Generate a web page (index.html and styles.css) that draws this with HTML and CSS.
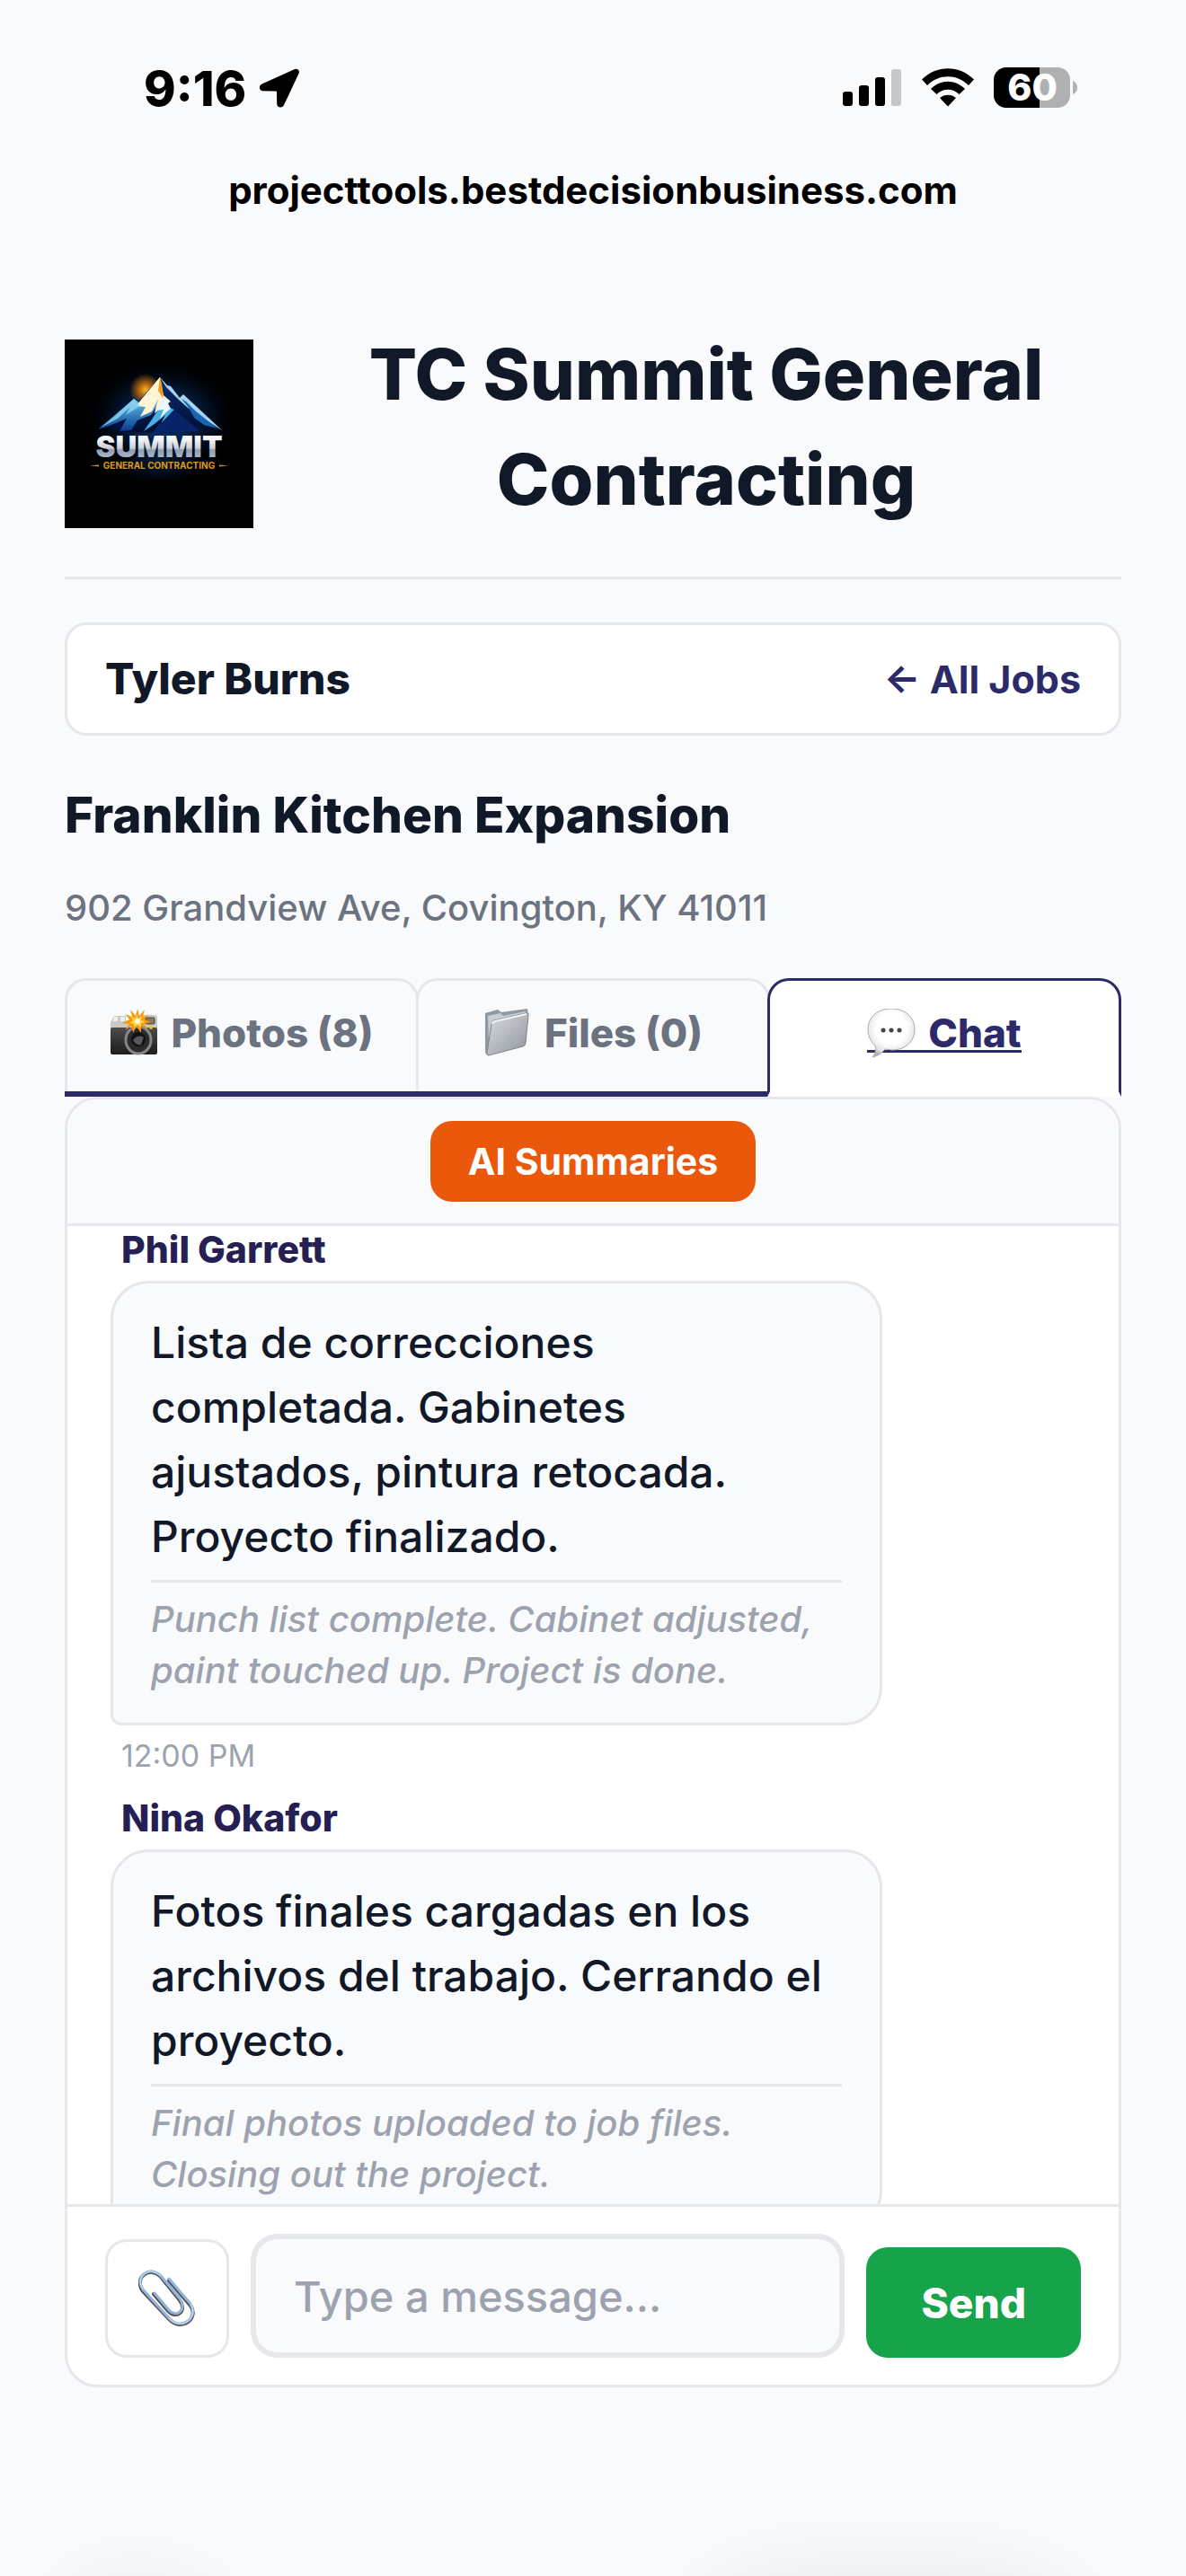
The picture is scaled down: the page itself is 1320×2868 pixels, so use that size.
FILE: index.html
```html
<!DOCTYPE html>
<html lang="en">
<head>
<meta charset="utf-8">
<meta name="viewport" content="width=device-width, initial-scale=1">
<title>Franklin Kitchen Expansion – Chat</title>
<link rel="stylesheet" href="styles.css">
</head>
<body>
<div class="screen">
  <div class="status-bar">
    <div class="status-time">
      <span>9:16</span>
      <svg class="location-icon" width="46" height="44" viewBox="0 0 46 44" aria-hidden="true"><path d="M39.500 1.200 L3.500 17.500 C-0.600 19.500 0.300 25.200 4.700 25.200 L19 25.400 Q20 25.400 20 26.400 L20.200 39.500 C20.200 44 26 45 28 41 L44.600 5.800 C46 2.500 43 -0.400 39.500 1.200Z"/></svg>
    </div>
    <div class="status-icons">
      <svg width="66" height="44" viewBox="0 0 66 44" aria-hidden="true">
        <rect x="0" y="26" width="11" height="16" rx="3"/><rect x="18" y="19" width="11" height="23" rx="3"/><rect x="36" y="10" width="11" height="32" rx="3"/><rect x="54" y="1" width="11" height="41" rx="3" fill="#c5c7c8"/>
      </svg>
      <svg width="58" height="44" viewBox="0 0 58 44" aria-hidden="true">
        <path d="M0 12.500 C16 -4 42 -4 58 12.500 L52 19 C39 6 19 6 6 19Z"/>
        <path d="M10 23 C21 12 37 12 48 23 L41.500 29 C34.500 22 23.500 22 16.500 29Z"/>
        <path d="M20 33 C25 28.500 33 28.500 38 33 L29 42.500Z"/>
      </svg>
      <svg width="94" height="58" viewBox="0 -6 94 58" aria-label="Battery 60 percent">
        <defs><clipPath id="battery"><rect width="85" height="45" rx="14"/></clipPath></defs>
        <g clip-path="url(#battery)"><rect width="51" height="45"/><rect x="51" width="34" height="45" fill="#aeb0b2"/></g>
        <path d="M88 15 Q93 17 93 22.500 Q93 28 88 30Z" fill="#aeb0b2"/>
        <text class="battery-text" x="43" y="37" text-anchor="middle">60</text>
      </svg>
    </div>
  </div>
  <div class="address-bar">projecttools.bestdecisionbusiness.com</div>

  <main class="page">
    <header class="brand">
      <svg class="brand-logo" viewBox="0 0 210 210" role="img" aria-label="Summit General Contracting">
        <defs>
          <radialGradient id="night"><stop offset="0" stop-color="#07458f"/><stop offset=".55" stop-color="#031d42" stop-opacity=".7"/><stop offset="1" stop-color="#000" stop-opacity="0"/></radialGradient>
          <radialGradient id="sun"><stop offset="0" stop-color="#ffb52a"/><stop offset=".4" stop-color="#d67a0b" stop-opacity=".8"/><stop offset="1" stop-color="#d67a0b" stop-opacity="0"/></radialGradient>
          <linearGradient id="ice" x2="0" y2="1"><stop offset="0" stop-color="#fff"/><stop offset=".45" stop-color="#5cb9e8"/><stop offset="1" stop-color="#0a3a8c"/></linearGradient>
          <linearGradient id="deep" x2="0" y2="1"><stop offset="0" stop-color="#0c2f70"/><stop offset="1" stop-color="#020d33"/></linearGradient>
          <linearGradient id="steel" x2="0" y2="1"><stop offset=".3" stop-color="#f4f5f8"/><stop offset=".55" stop-color="#c9ced8"/><stop offset=".6" stop-color="#8f9db2"/><stop offset="1" stop-color="#c2cedd"/></linearGradient>
        </defs>
        <rect width="210" height="210"/>
        <ellipse cx="108" cy="88" rx="88" ry="66" fill="url(#night)"/>
        <ellipse cx="105" cy="140" rx="60" ry="24" fill="url(#night)" opacity=".35"/>
        <circle cx="90" cy="56" r="18" fill="url(#sun)"/>
        <path d="M37 100 L77 66 L83 68 L106 42 L113 50 L128 65 L132 62 L175 101 L145 96 L121 104 L62 103 L52 97Z" fill="url(#deep)"/>
        <path d="M37 100 L77 66 L83 70 L106 42 L108 66 L96 84 L81 90 L74 101 L61 102 L69 88 L52 95Z" fill="url(#ice)"/>
        <path d="M106 42 L85 67 L80 74 L90 75 L84 86 L97 80 L104 66 L100 82 L118 69 L110 62Z" fill="#fff4d6"/>
        <path d="M106 42 L104 57 L110 66 L108 49Z" fill="#f39b16"/>
        <path d="M106 42 L114 51 L118 52 L128 65 L132 61 L175 101 L153 87 L137 76 L127 67 L113 53Z" fill="#a9d4f0"/>
        <path d="M130 66 L138 76 L144 87 L155 95 L170 99 L146 80 L135 69Z" fill="#1766b4"/>
        <path d="M77 66 L57 84 L40 98 L59 88 L73 75 L68 84 L84 74Z" fill="#8fd4f2" opacity=".8"/>
        <path d="M112 65 L97 89 L88 102 L100 94 L112 84 L107 94 L97 104 L122 78 L117 76Z" fill="#48b0e6"/>
        <path d="M122 78 L150 102 L98 104Z" fill="#07246b"/>
        <path d="M112 65 L103 79 L110 78 L106 88 L113 81 L118 77Z" fill="#eaf8ff"/>
        <text class="logo-name" x="105" y="131" text-anchor="middle" fill="url(#steel)">SUMMIT</text>
        <text class="logo-tag" x="105" y="144" text-anchor="middle">GENERAL CONTRACTING</text>
        <path d="M28 140.500 L38 139.500 V141.500Z M182 140.500 L172 139.500 V141.500Z" fill="#d98e10"/>
      </svg>
      <h1 class="brand-title">TC Summit General Contracting</h1>
    </header>

    <div class="job-bar">
      <span class="job-client">Tyler Burns</span>
      <a class="job-back" href="#jobs">← All Jobs</a>
    </div>

    <h2 class="job-title">Franklin Kitchen Expansion</h2>
    <p class="job-address">902 Grandview Ave, Covington, KY 41011</p>

    <nav class="tabs">
      <a class="tab" href="#photos">
        <svg class="tab-icon" viewBox="0 0 54 54" aria-hidden="true">
          <defs><linearGradient id="cam" x2="0" y2="1"><stop offset="0" stop-color="#4b4b4b"/><stop offset="1" stop-color="#1d1d1d"/></linearGradient></defs>
          <path d="M3 12 Q3 8 7 8 H18 V14 H33 L36 7 H50 Q53 7 53 11 V24 H1 V15Z" fill="#c9cac6"/>
          <path d="M4 9 h5 v5 h-5z M12 9 h5 v5 h-5z" fill="#eee"/>
          <rect x="40" y="10" width="10" height="7" rx="1" fill="#8a7762" stroke="#4c4238"/>
          <rect x="1" y="21" width="52" height="30" rx="2" fill="url(#cam)"/>
          <ellipse cx="32" cy="35" rx="14" ry="15" fill="#2b2b2d" stroke="#85878b" stroke-width="3"/>
          <circle cx="32" cy="34" r="8" fill="#111"/><path d="M26 35 Q32 28 38 32 L35 40 Q30 42 26 35Z" fill="#56585c"/>
          <circle cx="46" cy="21" r="2" fill="#f2c21c"/>
          <path d="M31 0 L33 8 L39 1 L37 9 L44 7 L38 12 L46 15 L38 17 L43 23 L35 19 L35 27 L30 20 L26 27 L25 19 L17 24 L22 17 L14 16 L22 12 L17 6 L25 9 L23 1 L29 8Z" fill="#f79a12"/>
          <path d="M30 6 L32 11 L36 8 L35 13 L39 14 L35 17 L35 21 L31 18 L27 21 L27 17 L22 16 L26 13 L24 9 L29 11Z" fill="#ffd63c"/><circle cx="31" cy="14" r="3" fill="#fffbe0"/>
        </svg>
        <span>Photos (8)</span>
      </a>
      <a class="tab" href="#files">
        <svg class="tab-icon" viewBox="0 0 54 54" aria-hidden="true">
          <defs><linearGradient id="fold" x2="1" y2="1"><stop offset="0" stop-color="#d8dbdf"/><stop offset=".5" stop-color="#b4b9bf"/><stop offset="1" stop-color="#8d939b"/></linearGradient></defs>
          <path d="M2 5 L16 1 L20 4 L49 0 L50 8 L12 46 L4 51 Q2 50 2 47Z" fill="#8e9aa3"/>
          <path d="M5 8 L19 5 L22 8 L47 3 V9 L6 40Z" fill="#c8ced3"/>
          <path d="M9 17 Q9 14 12 13 L47 5 Q51 4 50 8 L47 38 Q47 41 44 42 L6 52 Q3 52 4 49Z" fill="url(#fold)" stroke="#7e858c"/>
          <path d="M10 17 Q10 15 13 14 L48 6" fill="none" stroke="#f1f3f4" stroke-width="2"/>
        </svg>
        <span>Files (0)</span>
      </a>
      <a class="tab tab-active" href="#chat" aria-current="page">
        <span class="tab-underline">
          <svg class="tab-icon" viewBox="0 0 54 54" aria-hidden="true">
            <defs><radialGradient id="bub" cx=".5" cy=".4" r=".6"><stop offset=".55" stop-color="#fff"/><stop offset=".85" stop-color="#e6e6e6"/><stop offset="1" stop-color="#b5b5b5"/></radialGradient></defs>
            <path d="M27 0 C42 0 53 9 53 23 C53 37 42 46 28 46 L20 45 Q15 52 6 54 Q11 48 9 41 C4 37 1 30 1 23 C1 9 12 0 27 0Z" fill="url(#bub)" stroke="#a9a9a9"/>
            <circle cx="18" cy="24" r="2.500" fill="#444"/><circle cx="27" cy="24" r="2.500" fill="#444"/><circle cx="36" cy="24" r="2.500" fill="#444"/>
          </svg>
          <span>Chat</span>
        </span>
      </a>
    </nav>

    <section class="chat">
      <div class="chat-tools"><button class="summary-button" type="button">AI Summaries</button></div>
      <div class="messages">
        <article class="message">
          <div class="message-author">Phil Garrett</div>
          <div class="bubble">
            <p class="bubble-text">Lista de correcciones completada. Gabinetes ajustados, pintura retocada. Proyecto finalizado.</p>
            <p class="bubble-translation">Punch list complete. Cabinet adjusted, paint touched up. Project is done.</p>
          </div>
          <time class="message-time">12:00 PM</time>
        </article>
        <article class="message">
          <div class="message-author">Nina Okafor</div>
          <div class="bubble">
            <p class="bubble-text">Fotos finales cargadas en los archivos del trabajo. Cerrando el proyecto.</p>
            <p class="bubble-translation">Final photos uploaded to job files. Closing out the project.</p>
          </div>
        </article>
      </div>
      <form class="composer">
        <button class="attach-button" type="button" aria-label="Attach a file">
          <svg width="64" height="64" viewBox="-1 0 64 64" aria-hidden="true" fill="none" stroke-linecap="round">
            <path d="M33 12 L57 40 C67 54 47 70 33 55 L4 24 C-7 9 12 -5 24 8 L45 34 C54 46 41 56 32 46 L16 27" stroke="#54504f" stroke-width="4"/>
            <path d="M33 10 L57 38 C67 53 47 69 33 54 L4 22 C-6 8 12 -6 24 7 L45 32 C54 45 41 54 33 45 L17 26" stroke="#8fb4de" stroke-width="3"/>
            <path d="M57 38 C67 53 47 69 33 54 M4 22 C-6 8 12 -6 24 7" stroke="#dbe8f5" stroke-width="1"/>
          </svg>
        </button>
        <input class="message-input" type="text" placeholder="Type a message..." aria-label="Message">
        <button class="send-button" type="submit">Send</button>
      </form>
    </section>
  </main>
  <div class="toolbar-glow" aria-hidden="true"><span class="glow-round"></span><span class="glow-pill"></span></div>
</div>
</body>
</html>
```
FILE: styles.css
```css
* { box-sizing: border-box; }

:root {
  --bg: #f9fafc;
  --line: #e5e7eb;
  --ink: #111827;
  --navy: #2d2a6a;
  --muted: #6b7280;
  --faint: #9ca3af;
}

body {
  margin: 0;
  background: var(--bg);
  color: var(--ink);
  font-family: Inter, "Liberation Sans", sans-serif;
}

h1, h2, p { margin: 0; }
button, input { font-family: inherit; margin: 0; }
a { color: inherit; text-decoration: none; }

.screen {
  position: relative;
  display: flex;
  flex-direction: column;
  min-height: 100vh;
  overflow: hidden;
}

/* Phone status bar */
.status-bar {
  display: flex;
  justify-content: space-between;
  align-items: center;
  height: 60px;
  margin-top: 68px;
  padding: 0 120px 0 160px;
  color: #000;
}
.status-time {
  display: flex;
  align-items: center;
  gap: 14px;
  font-size: 54px;
  font-weight: 800;
}
.status-icons { display: flex; align-items: center; gap: 22px; }
.battery-text { font-size: 41px; font-weight: 800; fill: #fff; }
.address-bar {
  margin-top: 54px;
  color: #000;
  font-size: 42px;
  font-weight: 700;
  line-height: 60px;
  text-align: center;
}

.page { padding: 116px 72px 0; }

.brand {
  display: flex;
  align-items: flex-start;
  gap: 42px;
  padding-bottom: 50px;
  border-bottom: 3px solid var(--line);
}
.brand-logo { flex: none; width: 210px; height: 210px; margin-top: 20px; }
.logo-name { font-size: 33px; font-weight: 900; }
.logo-tag { font-size: 10px; font-weight: 700; fill: #dd9a14; }
.brand-title {
  flex: 1;
  font-size: 79px;
  font-weight: 800;
  line-height: 117px;
  text-align: center;
}

.job-bar {
  display: flex;
  justify-content: space-between;
  align-items: center;
  margin-top: 48px;
  padding: 30px 42px;
  border: 3px solid var(--line);
  border-radius: 24px;
  background: #fff;
  line-height: 60px;
}
.job-client { font-size: 48px; font-weight: 800; }
.job-back { font-size: 43px; font-weight: 700; color: var(--navy); }
.job-title { margin-top: 48px; font-size: 55px; font-weight: 800; line-height: 80px; }
.job-address {
  margin-top: 34px;
  color: var(--muted);
  font-size: 40px;
  font-weight: 500;
  line-height: 60px;
}

/* Tabs share their side borders; the open tab covers the rule below them */
.tabs {
  display: flex;
  align-items: flex-start;
  margin-top: 48px;
  border-bottom: 6px solid var(--navy);
}
.tab {
  display: flex;
  flex: 1 1 0;
  align-items: center;
  justify-content: center;
  gap: 14px;
  height: 126px;
  padding-bottom: 7px;
  border: 3px solid var(--line);
  border-bottom: 0;
  border-radius: 24px 24px 0 0;
  color: var(--muted);
  font-size: 44px;
  font-weight: 800;
  line-height: 54px;
}
.tab + .tab { margin-left: -3px; }
.tab-active {
  height: 132px;
  margin-bottom: -6px;
  border-color: var(--navy);
  border-bottom: 6px solid #fff;
  background: #fff;
  color: var(--navy);
}
.tab-icon { flex: none; width: 54px; height: 54px; }
.tab-underline {
  display: flex;
  align-items: center;
  gap: 14px;
  background: linear-gradient(currentColor, currentColor) 0 46px / 100% 3px no-repeat;
}

.chat {
  overflow: hidden;
  border: 3px solid var(--line);
  border-radius: 36px;
  background: #fff;
}
.chat-tools {
  display: flex;
  justify-content: center;
  padding: 24px;
  border-bottom: 3px solid var(--line);
  background: var(--bg);
}
.summary-button {
  height: 90px;
  padding: 0 42px;
  border: 0;
  border-radius: 24px;
  background: #ea580c;
  color: #fff;
  font-size: 41px;
  font-weight: 700;
}

.messages {
  height: 1089px;
  padding: 2px 48px 0;
  overflow: hidden;
}
.message {
  display: flex;
  flex-direction: column;
  align-items: flex-start;
  width: 80%;
  margin-bottom: 21px;
}
.message-author {
  margin-bottom: 11px;
  padding-left: 12px;
  color: #251f54;
  font-size: 41px;
  font-weight: 800;
  line-height: 48px;
}
.bubble {
  width: 100%;
  padding: 30px 42px;
  border: 3px solid var(--line);
  border-radius: 42px 42px 42px 12px;
  background: var(--bg);
}
.bubble-text { font-size: 48px; font-weight: 500; line-height: 72px; }
.bubble-translation {
  margin-top: 12px;
  padding-top: 12px;
  border-top: 3px solid var(--line);
  color: var(--faint);
  font-size: 40px;
  font-style: italic;
  font-weight: 500;
  line-height: 57px;
}
.message-time {
  margin-top: 10px;
  padding-left: 12px;
  color: var(--faint);
  font-size: 34px;
  line-height: 48px;
}

.composer {
  display: flex;
  align-items: flex-end;
  gap: 24px;
  padding: 30px 42px;
  border-top: 3px solid var(--line);
}
.attach-button {
  display: flex;
  flex: none;
  align-items: center;
  justify-content: center;
  width: 138px;
  height: 132px;
  padding: 0;
  border: 3px solid var(--line);
  border-radius: 24px;
  background: #fff;
}
.message-input {
  flex: 1;
  min-width: 0;
  height: 138px;
  padding: 0 42px;
  border: 6px solid var(--line);
  border-radius: 30px;
  background: var(--bg);
  color: var(--ink);
  font-size: 47px;
  font-weight: 500;
}
.message-input::placeholder { color: var(--faint); opacity: 1; }
.send-button {
  flex: none;
  height: 123px;
  padding: 0 61px;
  border: 0;
  border-radius: 24px;
  background: #16a34a;
  color: #fff;
  font-size: 46px;
  font-weight: 800;
}

/* Soft shadows of the browser controls just below the window edge */
.toolbar-glow {
  position: absolute;
  top: 100%;
  left: 0;
  right: 0;
  display: flex;
  justify-content: space-between;
  padding: 30px 132px 0 82px;
}
.glow-round, .glow-pill {
  height: 144px;
  border-radius: 72px;
  box-shadow: 0 0 120px rgba(0, 0, 0, .12);
}
.glow-round { width: 144px; }
.glow-pill { width: 36%; }
```
